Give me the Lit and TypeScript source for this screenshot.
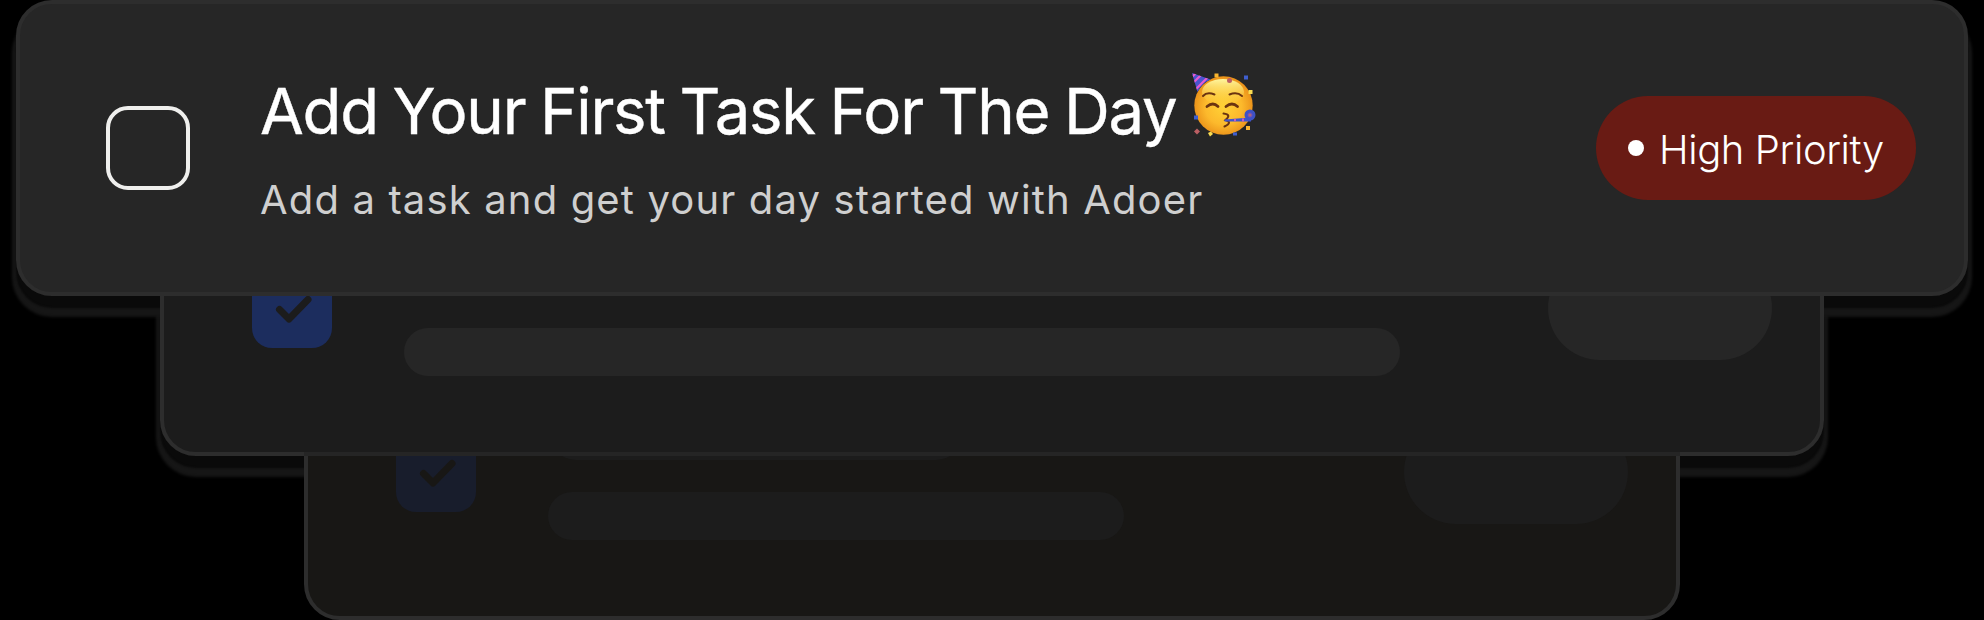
import { LitElement, html, css } from "lit";
import { customElement } from "lit/decorators.js";

@customElement("check-tile")
class CheckTile extends LitElement {
  static styles = css`
    :host { display: block; flex: none; width: 80px; height: 80px; border-radius: 20px; background: var(--tile); }
    svg { display: block; width: 80px; height: 80px; fill: none; stroke: var(--mark); stroke-width: 7; stroke-linecap: round; stroke-linejoin: round; }
  `;
  render() {
    return html`<svg viewBox="0 0 80 80"><path d="M27.5 41.5 L37 51 L56 31.5" /></svg>`;
  }
}

@customElement("party-face")
class PartyFace extends LitElement {
  static styles = css`
    :host { display: block; flex: none; width: 66px; height: 66px; }
    svg { display: block; }
  `;
  render() {
    return html`<svg width="66" height="66" viewBox="0 0 66 66">
      <defs>
        <radialGradient id="face" cx="50%" cy="52%" r="52%">
          <stop offset="0" stop-color="#ffd236" /><stop offset=".6" stop-color="#fcb92c" /><stop offset="1" stop-color="#ea9018" />
        </radialGradient>
        <linearGradient id="shine" x1="0" y1="0" x2="0" y2="1">
          <stop offset="0" stop-color="#fff7a0" /><stop offset="1" stop-color="#ffe14a" stop-opacity="0" />
        </linearGradient>
        <clipPath id="cone"><path d="M1 1 L19.5 7.5 Q11 11 6.500 20 Z" /></clipPath>
      </defs>
      <circle cx="32.500" cy="33.5" r="29.2" fill="url(#face)" />
      <ellipse cx="32" cy="20" rx="21" ry="13" fill="url(#shine)" />
      <g clip-path="url(#cone)">
        <rect width="24" height="24" fill="#4a55cf" />
        <g stroke="#e95bd0" stroke-width="2.2"><path d="M0 6 L6 0" /><path d="M1 12 L12 1" /><path d="M3 19 L19 3" /></g>
      </g>
      <g fill="none" stroke="#6b3410" stroke-width="2" stroke-linecap="round">
        <path d="M12 24 Q16 19.5 23.5 22.5" /><path d="M38.500 22.5 Q46 19.500 51 24" />
        <path d="M16 34.500 Q22 29.5 27 34.500" stroke-width="2.8" /><path d="M35 34.500 Q41 29.5 46.500 34.500" stroke-width="2.8" />
        <path d="M32.5 41.5 Q41 42.500 34.500 48 Q42 50.500 33.500 54.500" />
      </g>
      <path d="M33.500 47.500 L60 45.500 L60 49.500 L33.500 49.500 Z" fill="#3f55cc" />
      <path d="M44 47 v2.300 M52 46.500 v3" stroke="#c65bc4" stroke-width="2" />
      <circle cx="59" cy="43" r="4" fill="#6a4fc4" stroke="#3d52c4" stroke-width="3" />
      <circle cx="59" cy="43" r="1.600" fill="#a56a7c" />
      <g fill="#3f5ecf"><rect x="53" y="3.500" width="4" height="4" /><rect x="3" y="43.500" width="4" height="4" /><rect x="42" y="60.500" width="4" height="3" /></g>
      <g fill="#f9b52f"><rect x="23.500" y="1.500" width="4" height="4" /><rect x="57.500" y="18" width="4" height="4" fill="#f9dc52" /><rect x="55" y="54" width="4" height="4" /><path d="M17 61 l3-1.500 l2 2.500 l-3 2.500z" fill="#f9dc52" /></g>
      <g fill="#bb5f63"><circle cx="38.500" cy="8.500" r="2.500" /><path d="M6 56.500 l3 3 l-3 3 l-3 -3z" /></g>
    </svg>`;
  }
}

@customElement("app-root")
class AppRoot extends LitElement {
  static styles = css`
    :host { display: block; width: 1984px; height: 620px; background: #000; overflow: hidden; isolation: isolate; }
    .stack { display: flex; flex-direction: column-reverse; align-items: center; justify-content: flex-end; height: 620px; }
    .card { position: relative; flex: none; box-sizing: border-box; height: 296px; border: 4px solid #2d2d2d; border-radius: 36px; display: flex; align-items: center; padding: 0 48px 0 86px; }
    .first { width: 1952px; background: #262626; }
    .second { width: 1664px; margin-top: -136px; padding-left: 88px; background: #1c1c1c; }
    .third { width: 1376px; margin-top: -132px; padding-left: 88px; background: #181715; }
    .first::before, .second::before { content: ""; position: absolute; inset: -4px; z-index: -1; border-radius: 36px; box-shadow: 0 12px 2px 0 #0a0a0a, 0 17px 3px 4px #161616; }
    .second::after { content: ""; position: absolute; left: 140px; right: 140px; bottom: -4px; height: 4px; background: #252525; }
    .second check-tile { --tile: #1c2d5e; --mark: #1c1c1c; }
    .third check-tile { --tile: #181d2c; --mark: #181715; }
    .box { flex: none; box-sizing: border-box; width: 84px; height: 84px; border: 4px solid #efefed; border-radius: 22px; }
    .copy { flex: 1; display: flex; flex-direction: column; margin-left: 70px; }
    .title { display: flex; align-items: center; height: 78px; gap: 14px; font: 400 63.5px/78px Inter, sans-serif; letter-spacing: -1.23px; word-spacing: -2px; color: #fff; white-space: pre; -webkit-text-stroke: 0.4px #fff; }
    party-face { margin-bottom: 11px; }
    .sub { height: 56px; padding-top: 22px; margin-bottom: -3px; font: 400 40px/56px Inter, sans-serif; letter-spacing: 1.15px; color: #cfcfcf; white-space: pre; }
    .badge { flex: none; box-sizing: border-box; width: 320px; height: 104px; border-radius: 52px; background: #691b14; display: flex; align-items: center; padding-left: 32px; gap: 15px; font: 300 40px/56px Inter, sans-serif; letter-spacing: -0.4px; color: #fff; white-space: pre; }
    .dot { width: 16px; height: 16px; border-radius: 50%; background: #fff; }
    .label { padding-top: 3px; }
    .lines { flex: 1; display: flex; flex-direction: column; gap: 32px; margin-left: 72px; }
    .line { height: 48px; border-radius: 24px; background: var(--fill); }
    .head { height: 56px; width: 416px; border-radius: 28px; }
    .long { width: 996px; }
    .short { width: 576px; }
    .pill { flex: none; width: 224px; height: 104px; border-radius: 52px; background: var(--fill); }
    .second { --fill: #262626; }
    .third { --fill: #1c1c1c; }
  `;
  placeholder(level: string, bar: string) {
    return html`<div class="card ${level}">
      <check-tile></check-tile>
      <div class="lines"><div class="line head"></div><div class="line ${bar}"></div></div>
      <div class="pill"></div>
    </div>`;
  }
  render() {
    return html`<div class="stack">
      ${this.placeholder("third", "short")}
      ${this.placeholder("second", "long")}
      <div class="card first">
        <div class="box"></div>
        <div class="copy">
          <div class="title"><span>Add Your First Task For The Day</span><party-face></party-face></div>
          <div class="sub">Add a task and get your day started with Adoer</div>
        </div>
        <div class="badge"><span class="dot"></span><span class="label">High Priority</span></div>
      </div>
    </div>`;
  }
}
